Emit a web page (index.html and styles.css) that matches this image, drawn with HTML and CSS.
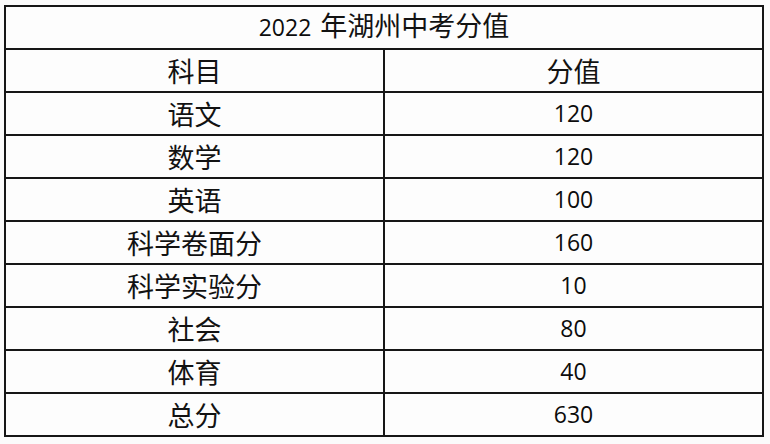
FILE: index.html
```html
<!DOCTYPE html>
<html lang="zh-CN">
<head>
<meta charset="utf-8">
<link rel="stylesheet" href="styles.css">
</head>
<body>
<div class="page">
<table class="scores">
  <tr class="title-row"><td colspan="2"><span class="num year">2022</span><span class="cjk">年湖州中考分值</span></td></tr>
  <tr><td class="cjk">科目</td><td class="cjk">分值</td></tr>
  <tr><td class="cjk">语文</td><td class="num">120</td></tr>
  <tr><td class="cjk">数学</td><td class="num">120</td></tr>
  <tr><td class="cjk">英语</td><td class="num">100</td></tr>
  <tr><td class="cjk">科学卷面分</td><td class="num">160</td></tr>
  <tr><td class="cjk">科学实验分</td><td class="num">10</td></tr>
  <tr><td class="cjk">社会</td><td class="num">80</td></tr>
  <tr><td class="cjk">体育</td><td class="num">40</td></tr>
  <tr><td class="cjk">总分</td><td class="num">630</td></tr>
</table>
</div>
</body>
</html>
```

FILE: styles.css
```css
html, body {
  margin: 0;
  padding: 0;
  background: #fbfbfb;
}
.page {
  padding: 5px 0 0 4px;
}
.scores {
  border-collapse: collapse;
  width: 760px;
  background: #fdfdfd;
  color: #121212;
  font-family: "Open Sans", "Noto Sans CJK SC", sans-serif;
}
.scores td {
  border: 2px solid #161616;
  text-align: center;
  vertical-align: middle;
  padding: 0;
  height: 41px;
  width: 50%;
  line-height: 1;
}
.scores .title-row td {
  height: 41px;
  line-height: 30px;
}
.cjk {
  font-family: "Noto Sans CJK SC", sans-serif;
  font-size: 27px;
}
.num {
  font-family: "Open Sans", "Noto Sans CJK SC", sans-serif;
  font-size: 23px;
  color: #0c0c0c;
}
.title-row .year {
  font-size: 23px;
  margin-right: 9px;
}
```
